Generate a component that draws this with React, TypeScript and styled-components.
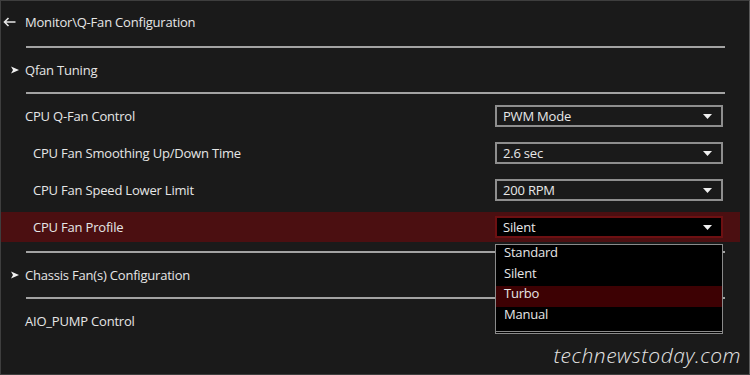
import styled, { createGlobalStyle } from 'styled-components';

const GlobalStyle = createGlobalStyle`
  html, body {
    margin: 0;
    padding: 0;
    background: #1a1a1a;
  }
`;

const Screen = styled.div`
  position: relative;
  box-sizing: border-box;
  width: 750px;
  height: 375px;
  overflow: hidden;
  background: #1a1a1a;
  border: 1px solid #3e3e3e;
  border-right-color: #5a5a5a;
  padding-right: 9px;
  font-family: 'Open Sans', 'Noto Sans', sans-serif;
  font-size: 13px;
  letter-spacing: -0.2px;
  color: #e6e6e6;
`;

const Column = styled.div`
  display: flex;
  flex-direction: column;
  padding-top: 6px;
`;

const Row = styled.div<{ $indent?: number; $active?: boolean }>`
  display: flex;
  align-items: center;
  justify-content: space-between;
  box-sizing: border-box;
  height: 30px;
  padding-left: ${({ $indent }) => $indent ?? 24}px;
  padding-right: 17px;
  margin-bottom: 7px;
  background: ${({ $active }) => ($active ? '#4b0f11' : 'transparent')};
`;

const Label = styled.span`
  display: flex;
  align-items: center;
  white-space: nowrap;
`;

const Lead = styled.span<{ $offset: number }>`
  position: absolute;
  left: ${({ $offset }) => $offset}px;
  display: flex;
  align-items: center;
`;

const LabelWrap = styled.div`
  position: relative;
  display: flex;
  align-items: center;
`;

const Divider = styled.div<{ $top?: number; $bottom?: number }>`
  height: 2px;
  margin: ${({ $top }) => $top ?? 0}px 15px ${({ $bottom }) => $bottom ?? 7}px 25px;
  background: #a3a3a3;
`;

const SelectWrap = styled.div`
  position: relative;
`;

const Select = styled.div<{ $open?: boolean }>`
  display: flex;
  align-items: center;
  justify-content: space-between;
  box-sizing: border-box;
  width: 228px;
  height: 22px;
  padding: 0 9px 0 6px;
  border: ${({ $open }) => ($open ? '2px solid #6d1012' : '2px solid #8e8e8e')};
  background: ${({ $open }) => ($open ? '#000' : '#1a1a1a')};
  color: #e8e8e8;
`;

const Menu = styled.ul`
  position: absolute;
  top: 28px;
  left: 0;
  z-index: 5;
  box-sizing: border-box;
  width: 228px;
  margin: 0;
  padding: 0 0 4px;
  list-style: none;
  background: #000;
  border: 1px solid #8a8a8a;
  border-bottom: 3px double #8a8a8a;
`;

const MenuItem = styled.li<{ $hover?: boolean }>`
  display: flex;
  align-items: center;
  box-sizing: border-box;
  height: 20.5px;
  padding: 0 0 6px 8px;
  background: ${({ $hover }) => ($hover ? '#3d0103' : 'transparent')};
  color: #e6e6e6;
`;

const Watermark = styled.div`
  position: absolute;
  right: 8px;
  bottom: 5px;
  font-family: 'Open Sans', sans-serif;
  font-style: italic;
  font-weight: 300;
  font-size: 21px;
  letter-spacing: 0.5px;
  color: #e4e4e4;
`;

const Caret = () => (
  <svg width="9" height="5" viewBox="0 0 9 5">
    <polygon points="0,0 9,0 4.5,5" fill="#f0f0f0" />
  </svg>
);

const Chevron = () => (
  <svg width="8" height="8" viewBox="0 0 8 8">
    <polygon points="0,0.5 8,4 0,7.5 2,4" fill="#f0f0f0" />
  </svg>
);

const BackArrow = () => (
  <svg width="13" height="10" viewBox="0 0 13 10">
    <path d="M12.5 5H1.5M5.5 1L1.5 5L5.5 9" stroke="#e6e6e6" strokeWidth="1.6" fill="none" />
  </svg>
);

const profiles = ['Standard', 'Silent', 'Turbo', 'Manual'];

export default function App() {
  return (
    <>
      <GlobalStyle />
      <Screen>
        <Column>
          <Row>
            <LabelWrap>
              <Lead $offset={-22}>
                <BackArrow />
              </Lead>
              <Label>Monitor\Q-Fan Configuration</Label>
            </LabelWrap>
          </Row>
          <Divider $top={2} />
          <Row>
            <LabelWrap>
              <Lead $offset={-14}>
                <Chevron />
              </Lead>
              <Label>Qfan Tuning</Label>
            </LabelWrap>
          </Row>
          <Divider />
          <Row>
            <Label>CPU Q-Fan Control</Label>
            <Select>
              PWM Mode
              <Caret />
            </Select>
          </Row>
          <Row $indent={32}>
            <Label>CPU Fan Smoothing Up/Down Time</Label>
            <Select>
              2.6 sec
              <Caret />
            </Select>
          </Row>
          <Row $indent={32}>
            <Label>CPU Fan Speed Lower Limit</Label>
            <Select>
              200 RPM
              <Caret />
            </Select>
          </Row>
          <Row $indent={32} $active>
            <Label>CPU Fan Profile</Label>
            <SelectWrap>
              <Select $open>
                Silent
                <Caret />
              </Select>
              <Menu>
                {profiles.map((p) => (
                  <MenuItem key={p} $hover={p === 'Turbo'}>
                    {p}
                  </MenuItem>
                ))}
              </Menu>
            </SelectWrap>
          </Row>
          <Divider $top={2} />
          <Row>
            <LabelWrap>
              <Lead $offset={-14}>
                <Chevron />
              </Lead>
              <Label>Chassis Fan(s) Configuration</Label>
            </LabelWrap>
          </Row>
          <Divider />
          <Row>
            <Label>AIO_PUMP Control</Label>
          </Row>
        </Column>
        <Watermark>technewstoday.com</Watermark>
      </Screen>
    </>
  );
}
